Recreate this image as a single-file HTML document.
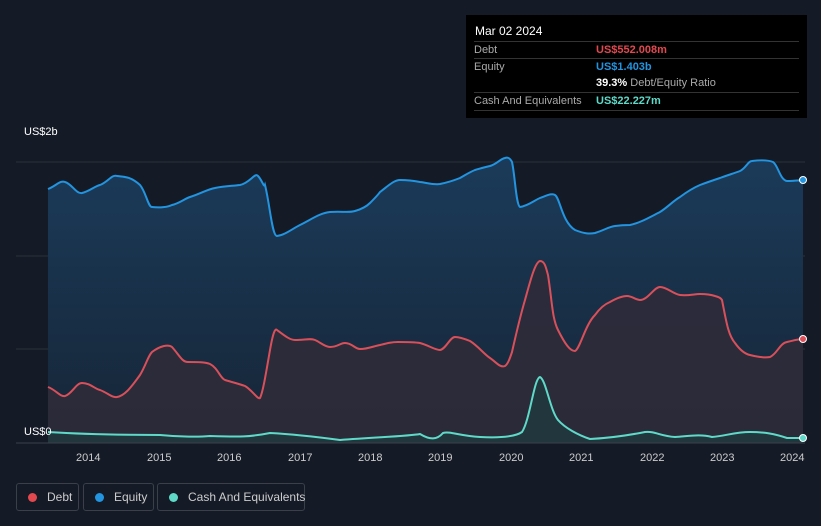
<!DOCTYPE html><html><head><style>
body{margin:0;width:821px;height:526px;background:#151b26;font-family:"Liberation Sans",sans-serif;overflow:hidden;position:relative}
.t{position:absolute;color:#fff;font-size:11px}
.tip{position:absolute;left:466px;top:15px;width:341px;height:103px;background:#000;}
.row{position:absolute;left:8px;width:325px;font-size:11px;color:#aaa;border-top:1px solid #333;white-space:nowrap}
.lg{position:absolute;top:483px;height:26px;border:1px solid #3a3f4a;border-radius:3px;color:#ccc;font-size:12px;line-height:26px;white-space:nowrap}
.lg i{display:inline-block;width:9px;height:9px;border-radius:50%;margin:0 10px 0 11px;vertical-align:-1px}
</style></head><body>
<svg width="821" height="526" style="position:absolute;left:0;top:0">
<defs><linearGradient id="eg" x1="0" y1="0" x2="0" y2="1"><stop offset="0" stop-color="#1b3b5a"/><stop offset="1" stop-color="#162536"/></linearGradient></defs>
<line x1="16" y1="162" x2="805" y2="162" stroke="#2a303b"/>
<line x1="16" y1="256" x2="805" y2="256" stroke="#2a303b"/>
<line x1="16" y1="349" x2="805" y2="349" stroke="#2a303b"/>
<path fill="url(#eg)" d="M48,189 C56,186 60,180 65,182 C72,184 76,194 82,193 C90,191 95,186 100,185 C108,182 112,174 117,176 C124,177 130,176 140,185 C146,192 148,207 152,207 C160,208 168,207 172,205 C180,203 184,199 190,197 C200,194 208,189 215,188 C225,186 232,186 240,185 C250,183 255,172 258,176 C262,180 264,188 265,185 C270,205 272,236 277,236 C285,235 292,229 300,225 C312,219 320,213 330,212 C342,211 348,213 355,211 C362,209 366,207 370,203 C375,198 378,195 380,192 C388,186 394,180 400,180 C408,180 415,181 420,182 C428,183 434,185 440,184 C450,182 455,180 460,178 C467,174 470,172 475,170 C482,168 485,167 490,166 C497,164 500,159 505,158 C508,157 510,158 512,162 C515,175 516,205 520,207 C528,206 535,200 540,198 C548,195 552,193 555,195 C560,198 562,222 575,230 C585,234 590,234 595,233 C605,230 608,227 615,226 C622,225 625,225 630,225 C640,223 650,217 660,212 C668,207 673,201 680,197 C688,191 693,188 700,185 C708,182 714,180 720,178 C728,175 735,173 740,171 C746,168 748,161 752,161 C760,160 768,160 773,162 C778,165 780,180 787,181 C795,181 800,180 803,180 L803,443 L48,443Z"/>
<path fill="#2d2b3a" opacity="0.9" d="M48,387 C56,390 60,397 65,396 C72,394 76,383 82,383 C90,383 95,389 100,390 C108,393 112,398 117,397 C124,396 130,389 140,375 C146,365 148,356 152,352 C160,346 168,344 172,347 C180,356 182,362 188,362 C198,362 205,362 210,364 C218,368 220,378 225,380 C235,383 240,384 245,386 C252,390 258,400 260,398 C263,392 266,373 270,350 C273,333 275,328 277,330 C285,336 290,340 295,340 C305,340 310,338 315,340 C320,342 325,347 330,347 C338,347 340,343 345,343 C352,343 355,349 360,349 C368,349 374,346 380,345 C388,343 392,342 398,342 C408,342 414,342 420,343 C428,345 435,350 440,350 C446,349 450,337 455,337 C460,337 465,339 470,341 C478,346 484,354 490,358 C496,362 500,368 505,366 C508,364 510,358 512,352 C517,330 522,310 525,300 C530,282 535,262 540,261 C545,261 546,268 548,275 C552,300 552,318 558,330 C565,344 570,351 575,351 C580,349 585,325 595,315 C600,308 605,304 610,302 C617,298 622,296 627,296 C632,296 636,300 640,300 C648,300 654,287 660,287 C667,287 673,294 680,295 C688,296 694,294 700,294 C708,294 712,295 715,296 C719,297 721,298 722,300 C726,320 728,335 735,343 C740,350 745,354 750,355 C758,357 765,358 770,357 C777,354 780,343 787,342 C795,340 800,339 803,339 L803,443 L48,443Z"/>
<path fill="#1f3a3e" opacity="0.8" d="M48,432 C80,434 120,435 160,435 C180,437 200,437 210,436 C240,437 250,437 270,433 C290,434 310,436 340,440 C380,437 410,436 420,434 C430,440 437,440 443,433 C450,431 460,436 480,437 C500,438 515,437 522,432 C530,420 534,378 540,377 C546,380 550,410 558,420 C565,428 578,435 590,439 C610,438 630,435 645,432 C655,431 660,436 675,437 C690,436 700,434 712,437 C725,436 735,432 750,432 C765,432 775,434 787,438 L803,438 L803,443 L48,443Z"/>
<path fill="none" stroke="#2394df" stroke-width="2" d="M48,189 C56,186 60,180 65,182 C72,184 76,194 82,193 C90,191 95,186 100,185 C108,182 112,174 117,176 C124,177 130,176 140,185 C146,192 148,207 152,207 C160,208 168,207 172,205 C180,203 184,199 190,197 C200,194 208,189 215,188 C225,186 232,186 240,185 C250,183 255,172 258,176 C262,180 264,188 265,185 C270,205 272,236 277,236 C285,235 292,229 300,225 C312,219 320,213 330,212 C342,211 348,213 355,211 C362,209 366,207 370,203 C375,198 378,195 380,192 C388,186 394,180 400,180 C408,180 415,181 420,182 C428,183 434,185 440,184 C450,182 455,180 460,178 C467,174 470,172 475,170 C482,168 485,167 490,166 C497,164 500,159 505,158 C508,157 510,158 512,162 C515,175 516,205 520,207 C528,206 535,200 540,198 C548,195 552,193 555,195 C560,198 562,222 575,230 C585,234 590,234 595,233 C605,230 608,227 615,226 C622,225 625,225 630,225 C640,223 650,217 660,212 C668,207 673,201 680,197 C688,191 693,188 700,185 C708,182 714,180 720,178 C728,175 735,173 740,171 C746,168 748,161 752,161 C760,160 768,160 773,162 C778,165 780,180 787,181 C795,181 800,180 803,180"/>
<path fill="none" stroke="#d9505a" stroke-width="2" d="M48,387 C56,390 60,397 65,396 C72,394 76,383 82,383 C90,383 95,389 100,390 C108,393 112,398 117,397 C124,396 130,389 140,375 C146,365 148,356 152,352 C160,346 168,344 172,347 C180,356 182,362 188,362 C198,362 205,362 210,364 C218,368 220,378 225,380 C235,383 240,384 245,386 C252,390 258,400 260,398 C263,392 266,373 270,350 C273,333 275,328 277,330 C285,336 290,340 295,340 C305,340 310,338 315,340 C320,342 325,347 330,347 C338,347 340,343 345,343 C352,343 355,349 360,349 C368,349 374,346 380,345 C388,343 392,342 398,342 C408,342 414,342 420,343 C428,345 435,350 440,350 C446,349 450,337 455,337 C460,337 465,339 470,341 C478,346 484,354 490,358 C496,362 500,368 505,366 C508,364 510,358 512,352 C517,330 522,310 525,300 C530,282 535,262 540,261 C545,261 546,268 548,275 C552,300 552,318 558,330 C565,344 570,351 575,351 C580,349 585,325 595,315 C600,308 605,304 610,302 C617,298 622,296 627,296 C632,296 636,300 640,300 C648,300 654,287 660,287 C667,287 673,294 680,295 C688,296 694,294 700,294 C708,294 712,295 715,296 C719,297 721,298 722,300 C726,320 728,335 735,343 C740,350 745,354 750,355 C758,357 765,358 770,357 C777,354 780,343 787,342 C795,340 800,339 803,339"/>
<path fill="none" stroke="#5fd9c8" stroke-width="2" d="M48,432 C80,434 120,435 160,435 C180,437 200,437 210,436 C240,437 250,437 270,433 C290,434 310,436 340,440 C380,437 410,436 420,434 C430,440 437,440 443,433 C450,431 460,436 480,437 C500,438 515,437 522,432 C530,420 534,378 540,377 C546,380 550,410 558,420 C565,428 578,435 590,439 C610,438 630,435 645,432 C655,431 660,436 675,437 C690,436 700,434 712,437 C725,436 735,432 750,432 C765,432 775,434 787,438 L803,438"/>
<line x1="16" y1="443" x2="805" y2="443" stroke="#3a404c"/>
<circle cx="803" cy="180" r="3.5" fill="#2394df" stroke="#fff" stroke-width="1"/>
<circle cx="803" cy="339" r="3.5" fill="#d9505a" stroke="#fff" stroke-width="1"/>
<circle cx="803" cy="438" r="3.5" fill="#5fd9c8" stroke="#fff" stroke-width="1"/>
<g fill="#ccc" font-size="11">
<text x="76" y="461">2014</text><text x="147" y="461">2015</text><text x="217" y="461">2016</text><text x="288" y="461">2017</text><text x="358" y="461">2018</text><text x="428" y="461">2019</text><text x="499" y="461">2020</text><text x="569" y="461">2021</text><text x="640" y="461">2022</text><text x="710" y="461">2023</text><text x="780" y="461">2024</text>
<text x="24" y="135" fill="#fff">US$2b</text><text x="24" y="435" fill="#fff">US$0</text>
</g>
</svg>
<div class="tip">
<div class="t" style="left:9px;top:9px;font-size:12px">Mar 02 2024</div>
<div class="row" style="top:26px;height:17px"><span style="position:absolute;top:2px">Debt</span><span style="position:absolute;left:122px;top:2px;color:#e3484f;font-weight:bold">US$552.008m</span></div>
<div class="row" style="top:43px;height:17px"><span style="position:absolute;top:2px">Equity</span><span style="position:absolute;left:122px;top:2px;color:#2394df;font-weight:bold">US$1.403b</span></div>
<div class="row" style="top:60px;height:17px;border:none"><span style="position:absolute;left:122px;top:2px"><b style="color:#fff">39.3%</b> Debt/Equity Ratio</span></div>
<div class="row" style="top:77px;height:17px"><span style="position:absolute;top:2px">Cash And Equivalents</span><span style="position:absolute;left:122px;top:2px;color:#5fd9c8;font-weight:bold">US$22.227m</span></div>
<div class="row" style="top:95px;height:0"></div>
</div>
<div class="lg" style="left:16px;width:61px"><i style="background:#e3484f"></i>Debt</div>
<div class="lg" style="left:83px;width:69px"><i style="background:#2394df"></i>Equity</div>
<div class="lg" style="left:157px;width:146px"><i style="background:#5fd9c8"></i>Cash And Equivalents</div>
</body></html>
